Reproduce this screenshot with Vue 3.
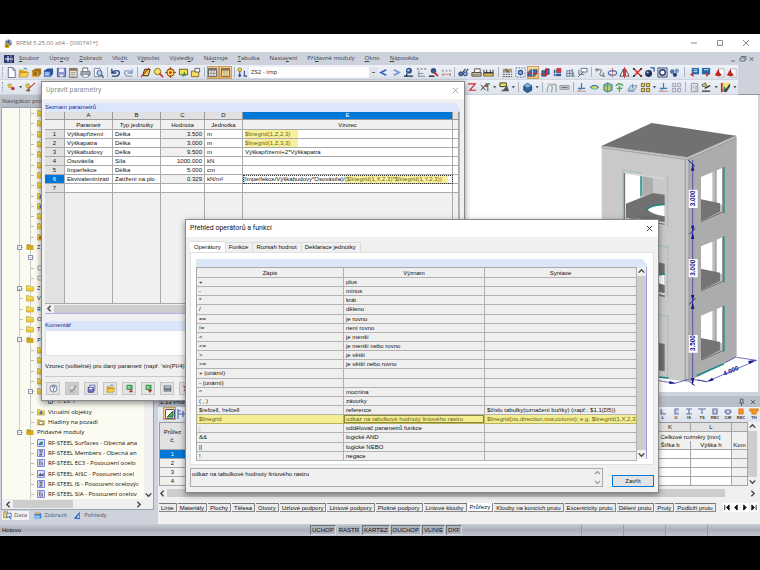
<script setup>
import { ref } from 'vue'

const menu = [
  ['', 'S', 'oubor'], ['Úpr', 'a', 'vy'], ['', 'Z', 'obrazit'], ['Vlo', 'ž', 'it'], ['V', 'ý', 'počet'],
  ['Výsled', 'k', 'y'], ['Ná', 's', 'troje'], ['', 'T', 'abulka'], ['Nasta', 'v', 'ení'],
  ['Pří', 'd', 'avné moduly'], ['', 'O', 'kno'], ['', 'N', 'ápověda'],
]

const glyph = {
  doc: '<path d="M2.500.500h5l2.500 2.500v8.500h-7.500z" fill="#fff" stroke="#667088"/><path d="M7.500.500v3h2.500" fill="none" stroke="#667088"/>',
  open: '<path d="M1 3h4l1 1h4v7H1z" fill="#d9a520"/><path d="M1 11l2-5h9l-2 5z" fill="#f6cf4f" stroke="#a87b12" stroke-width=".6"/><path d="M6 2q3-2 4 1" stroke="#2c6ab5" fill="none"/>',
  box: '<path d="M1 4l4-2.500h6v6l-3 3.500H1z" fill="#a9711f"/><path d="M1 5h7v6H1z" fill="#dfa23e"/><path d="M2.500 6.500h4M2.500 8.500h4" stroke="#4b3210"/>',
  bbox: '<path d="M1 4l4-2.500h6v6l-3 3.500H1z" fill="#2b4f98"/><path d="M1 5h7v6H1z" fill="#5d8ad1"/><path d="M2.500 6.500h4M2.500 8.500h4" stroke="#e7edf9"/>',
  save: '<path d="M1.500 1.500h9v9h-9z" fill="#8c93cf" stroke="#4a4f8e"/><path d="M3.500 1.500h5v4h-5z" fill="#f3f4fb"/><path d="M4 8h4v2.500H4z" fill="#dfe1f0"/>',
  sheet: '<path d="M1.500 1.500h8.500v10H1.500z" fill="#e9e3d6" stroke="#77706a"/><path d="M2 2h8v2H2z" fill="#8d6a4a"/><path d="M3 6h5M3 8h5M3 10h5" stroke="#8a8a8a" stroke-width=".8"/>',
  print: '<path d="M3 5V1h5l1 4" fill="#fff" stroke="#666"/><path d="M1 5h10v4H1z" fill="#a5adbd" stroke="#4d5566" stroke-width=".7"/><path d="M3 8h6v3H3z" fill="#fff" stroke="#555" stroke-width=".6"/>',
  preview: '<path d="M1.500 1.500h6.500v9H1.500z" fill="#fff" stroke="#7881a0"/><circle cx="7" cy="6.500" r="2.800" fill="#b9cfee" stroke="#40588e"/><path d="M9 8.500l2.500 3" stroke="#40588e" stroke-width="1.600"/>',
  undo: '<path d="M2 2v4.500h5M2.500 6q3-3 7-1.500 2 3-1.500 5.500H2" fill="none" stroke="#26447c" stroke-width="1.500"/>',
  redo: '<path d="M10 2v4.500H5M9.500 6q-3-3-7-1.500-2 3 1.500 5.500H10" fill="none" stroke="#8ca0bf" stroke-width="1.500"/>',
  para: '<path d="M3 9.500l2-7h6l-2 7z" fill="#f2dd3c" stroke="#222"/><path d="M1 11L10 1" stroke="#cc2424" stroke-width="1.200"/>',
  zoom: '<circle cx="5" cy="5" r="3.500" fill="#f3e268" stroke="#8a7412"/><path d="M7 7l4 4" stroke="#c33" stroke-width="1.800"/>',
  target: '<circle cx="6" cy="6" r="4" fill="#f5e35f" stroke="#a04010" stroke-width="1.200"/><circle cx="6" cy="6" r="1.500" fill="#c22"/><path d="M6 0v3M6 9v3M0 6h3M9 6h3" stroke="#a04010"/>',
  win: '<path d="M1.500 2.500h9v6h-9z" fill="#f1e052" stroke="#665c1b"/><path d="M4 11l3-6 2 4z" fill="#32925c"/>',
  folder: '<path d="M1.500 4.500h8v6h-8z" fill="#f7dc64" stroke="#7e6a1d"/><path d="M5.500 1.500h5v4h-5z" fill="#fff" stroke="#556"/>',
  grid: '<path d="M1.500 1.500h9v9h-9z" fill="#e4e4e4" stroke="#555"/><path d="M2 2h8v2H2z" fill="#777"/><path d="M4.500 4v6M7.500 4v6M2 7h8" stroke="#888" stroke-width=".8"/>',
  cols: '<path d="M1.500 1.500h9v9h-9z" fill="#f3d9a6" stroke="#6c5840"/><path d="M2 2h8v2H2z" fill="#8c745a"/><path d="M4.500 4v6M7.500 4v6" stroke="#9b7e57" stroke-width=".8"/>',
  load: '<circle cx="3" cy="3" r="2" fill="#eed43b" stroke="#77671b" stroke-width=".7"/><path d="M3 5v5M1.500 8.500L3 10.500l1.500-2M8 4v6h3" stroke="#2d4e87" fill="none" stroke-width="1.200"/>',
  prev: '<path d="M9 3L3 6l6 3" fill="none" stroke="#3565ba" stroke-width="1.700"/>',
  next: '<path d="M3 3l6 3-6 3" fill="none" stroke="#7195d2" stroke-width="1.700"/>',
  pin: '<circle cx="6.500" cy="4" r="3.200" fill="#29508b"/><circle cx="6" cy="3.500" r="1.300" fill="#a9c7ef"/><path d="M1 10h10M4 7v4" stroke="#1c2f55" stroke-width="1.500"/>',
  rpin: '<circle cx="6" cy="4" r="3" fill="#2c568f"/><path d="M6 5l5 5" stroke="#cf2525" stroke-width="2"/><path d="M1 10h6" stroke="#223" stroke-width="1.500"/>',
  xxx: '<path d="M1 1l2 2M3 1L1 3M5 1l2 2M7 1L5 3M9 1l2 2M11 1L9 3" stroke="#667" stroke-width=".7"/><path d="M3 4v6M2 10h8M3 7h5" stroke="#7685a0" fill="none"/>',
  rxx: '<path d="M1 3l2 2M3 3L1 5M5 3l2 2M7 3L5 5M9 3l2 2M11 3L9 5" stroke="#778" stroke-width=".7"/><path d="M1 8h10" stroke="#d77f7f"/><path d="M2 7v3M10 7v3" stroke="#888"/>',
  glasses: '<circle cx="3" cy="7.500" r="2.200" fill="#5477ad" stroke="#243f6c"/><circle cx="8" cy="7.500" r="2.200" fill="#8caad6" stroke="#243f6c"/><path d="M5 6L8 2M9 5l2-3" stroke="#243f6c" stroke-width="1.200"/>',
  car: '<path d="M1 6h10v4H1z" fill="#ddd0a4" stroke="#444"/><path d="M4 2h6v4H4z" fill="#fff" stroke="#444"/><path d="M2 8h8" stroke="#222" stroke-dasharray="1 1"/>',
  bridge: '<path d="M1 3v7M4 3v7M8 3v7M11 3v7M1 6h10" stroke="#333"/><path d="M1 7h10v3H1z" fill="#d8b94a" stroke="#444" stroke-width=".6"/>',
  pat: '<path d="M1 2h10v3H1z" fill="#b69875"/><path d="M1 5.500h10M1 8h10M1 10.500h10" stroke="#444" stroke-dasharray="2 1"/><path d="M4 2l3 4" stroke="#222"/>',
  gear: '<path d="M1 1h10v10H1z" fill="none" stroke="#5a6a8d" stroke-dasharray="1.500 1.500"/><circle cx="6" cy="6" r="2.300" fill="#92aee0" stroke="#28498b" stroke-width="1.200"/>',
  plane: '<path d="M1 6l3-3h7v4l-3 3H1z" fill="#3f72b9" stroke="#213b70" stroke-width=".8"/><path d="M1 7h10" stroke="#c22b2b" stroke-width="1.400"/><path d="M6 2v8" stroke="#d8e4f5" stroke-width=".8"/>',
  blk: '<path d="M2 4h4v6H2zM6 2h4v6H6z" fill="#3d6aae" stroke="#1e3667" stroke-width=".7"/><path d="M1 8h7M7 1v9" stroke="#d13030" stroke-width="1.200"/>',
  blk2: '<path d="M2 3h8v7H2z" fill="#33599b"/><path d="M5 1h5v5H5z" fill="#d33b3b"/><path d="M1 7h10M4 2v9" stroke="#dde6f5" stroke-width=".8"/>',
  truss: '<path d="M1 10h10M2 10V4M5 10V4M8 10V2M2 4h6M2 7h7" stroke="#5d8296" fill="none"/><path d="M9 5v5" stroke="#d35f5f"/>',
  comment: '<path d="M4.500 1.500h6.500v4H4.500z" fill="#fff" stroke="#596a8b"/><path d="M1 11L7 5M2 3v5h6" stroke="#596a8b" fill="none"/>',
  curve: '<circle cx="2" cy="3" r="1.200" fill="none" stroke="#555"/><path d="M3 3q6-1 3 3t5 4M9 6v4" fill="none" stroke="#566"/>',
  rot: '<ellipse cx="6" cy="6.500" rx="4.500" ry="2.500" fill="none" stroke="#4676b9" stroke-width="1.200"/><path d="M6 1v10" stroke="#c44" stroke-dasharray="2 1"/>',
  mirror: '<path d="M5 2v8H1zM7 2v8h4z" fill="#fff" stroke="#444"/><path d="M6 0v12" stroke="#d03030"/>',
  cross: '<path d="M2 2l8 8M10 2l-8 8" stroke="#c62828" stroke-width="1.500"/><path d="M1 1h2v2H1zM9 1h2v2H9zM1 9h2v2H1zM9 9h2v2H9z" fill="#333"/>',
  ball: '<circle cx="5" cy="7" r="3.800" fill="#20355e"/><circle cx="4" cy="6" r="1.200" fill="#b9c9e6"/><path d="M7 1h4v4" fill="none" stroke="#2f57a0" stroke-width="1.400"/>',
  ring: '<path d="M1 1h10v10H1z" fill="#cdd6e6" stroke="#3d4e72"/><circle cx="6" cy="6" r="3" fill="#fff" stroke="#283c6a" stroke-width="1.500"/>',
  balls: '<circle cx="3.500" cy="5" r="2.500" fill="#5476b1"/><circle cx="8.500" cy="4" r="2.500" fill="#7d9bcd"/><circle cx="6.500" cy="8.500" r="2.300" fill="#27457d"/>',
  mod: '<path d="M3 1h8v7H3z" fill="#2470b0"/><path d="M5 3h4M5 5h4" stroke="#cfe5f7"/><path d="M1 8l4-2v5z" fill="#c32f2f"/>',
  mod2: '<path d="M1 1h9v7H1z" fill="#2269a8"/><path d="M3 3h5" stroke="#d8e9f7"/><path d="M5 6l4 2-3 3z" fill="#c62f2f"/>',
  pdf: '<path d="M5 2h6v9H5z" fill="#fff" stroke="#999" stroke-width=".7"/><path d="M1 9l4-7 1 4 3 3-4 1z" fill="#c52020"/>',
  node: '<circle cx="4" cy="4" r="2" fill="#e9cf3a" stroke="#8a751b" stroke-width=".6"/><circle cx="7.500" cy="7" r="1.900" fill="#c92b2b"/>',
  line: '<path d="M1 10L11 1" stroke="#c33" stroke-width="1.200"/><circle cx="3" cy="4" r="2" fill="#e9d850" stroke="#6f651b" stroke-width=".6"/><circle cx="4" cy="9" r="1.700" fill="#5d8c3d"/>',
  zred: '<path d="M1 2h8L3 9h7" fill="none" stroke="#c72e3b" stroke-width="1.300"/>',
  axis: '<path d="M1 3l5 6M6 3L1 9" stroke="#333"/><path d="M6 2h5M8.500 2v8" stroke="#2f9152" stroke-width="1.300"/><circle cx="7" cy="4" r="1.500" fill="#c92b2b"/>',
  hand: '<path d="M1 1h7v4H1z" fill="#efe154" stroke="#333"/><path d="M2 10h9L9 4 5 8z" fill="#555"/>',
  cube: '<path d="M2 4l4-2.500L10.500 4v5L6 11.500 2 9z" fill="#2e6499" stroke="#1c3a66"/><path d="M2 4l4 2 4.500-2L6 1.500z" fill="#7fb3dd"/>',
  arch: '<path d="M1 11q1-9 4-8t1 8M6 3h5v8" fill="none" stroke="#7c9486"/><path d="M1 2h10" stroke="#c99a9a" stroke-dasharray="1 1"/>',
  slab: '<path d="M1 4h10v4H1z" fill="#c5cad2" stroke="#8d95a3"/><path d="M3 6h6" stroke="#666"/>',
  sup: '<path d="M6 1v6M2 7h8" stroke="#4777b6" stroke-width="1.300"/><path d="M1 10h10" stroke="#c77" stroke-width=".9"/><path d="M6 7l-3 3" stroke="#4a8d59"/>',
  surf: '<path d="M1 6q5-5 10 0-5 5-10 0z" fill="#58b6a4"/><path d="M3 6q3-3 6 0-3 3-6 0z" fill="#e6dc49"/><path d="M1 6q5-5 10 0" stroke="#4a63bd" fill="none"/>',
  solid: '<path d="M2 3l4-2 5 2v6l-5 2-4-2z" fill="#7ac0a4" stroke="#427d83"/><path d="M4 5h5v4H4z" fill="#d6c857"/><path d="M6 1v10" stroke="#5c7fc4"/>',
  tree: '<path d="M6 11V4M2 4q4-4 8 0M3 7h6" stroke="#58a35b" stroke-width="1.500" fill="none"/>',
  sheetg: '<path d="M1 9l3-5h7l-3 5z" fill="#c7ddd8" stroke="#7e96ab"/><path d="M1 10h7M6 2v5" stroke="#5d86c0"/>',
  quad: '<path d="M1.500 1.500h3.500v3.500H1.500zM7 1.500h3.500v3.500H7zM1.500 7h3.500v3.500H1.500zM7 7h3.500v3.500H7z" fill="#efd643" stroke="#4e481f" stroke-width=".8"/>',
  quadg: '<path d="M1.500 1.500h3.500v3.500H1.500zM7 1.500h3.500v3.500H7zM1.500 7h3.500v3.500H1.500zM7 7h3.500v3.500H7z" fill="#dbe0e9" stroke="#8992a5" stroke-width=".8"/>',
  list: '<path d="M2.500 1.500h7v9h-7z" fill="#e8ecf2" stroke="#8b95a7"/><path d="M4 4h1v1H4z" fill="#c33"/><path d="M4 6h1v1H4z" fill="#393"/><path d="M6 4.500h3M6 6.500h3M6 8.500h3" stroke="#889" stroke-width=".7"/>',
  wand: '<path d="M1 3l4-2 1 3-4 1z" fill="#eede45" stroke="#554"/><path d="M1 10h9M4 7l6-3" stroke="#333" stroke-width="1.500"/>',
  rain: '<path d="M1 1h2v10H1z" fill="#c22"/><path d="M3 1h2v8H3z" fill="#e8d52d"/><path d="M5 4l3 6H3z" fill="#31983d"/><path d="M4 11L11 1v4L7 11z" fill="#345"/><path d="M7 1h4L6 7z" fill="#f2e340"/>',
  help: '<circle cx="6" cy="6" r="4.700" fill="#eef2fb" stroke="#56618a"/><path d="M4.300 4.500q0-1.700 1.700-1.700t1.700 1.500Q7.700 5.500 6 6v1.300M6 8.300v1.200" fill="none" stroke="#34447e" stroke-width="1.100"/>',
  check: '<path d="M1.500 2h7.500v9H1.500z" fill="#dcdcdc" stroke="#a2a2a2" stroke-width=".7"/><path d="M3 7l2 3 6-8" fill="none" stroke="#7f7f7f" stroke-width="1.400"/>',
  saves: '<path d="M3.500 1.500h7v7h-7z" fill="#eef" stroke="#4a4f9e"/><path d="M1.500 4.500h7v6.500h-7z" fill="#7075c6" stroke="#34397c"/><path d="M3 5h4v2H3z" fill="#fff"/>',
  xls: '<path d="M2 1h8v7H2z" fill="#3a9a52"/><path d="M3.500 2.500l4 4M7.500 2.500l-4 4" stroke="#fff"/><path d="M5 11l3-4 3 4z" fill="#c62b2b"/>',
  xls2: '<path d="M2 1h8v7H2z" fill="#3a9a52"/><path d="M3.500 2.500l4 4M7.500 2.500l-4 4" stroke="#fff"/><path d="M5 8h6l-3 4z" fill="#c62b2b"/>',
  calc: '<path d="M1 2h10v8H1z" fill="#555c6b"/><path d="M2 3h8v2H2z" fill="#cdd6e2"/><path d="M2 6.500h8M2 8.500h8" stroke="#e5e5e5" stroke-dasharray="1.500 1"/>',
  del: '<path d="M1 1l5 4 4-3-3 4 4 5-5-3-4 2 2-4z" fill="#c7202c"/>',
  greenT: '<path d="M1.500 1.500h9v9h-9z" fill="#fff" stroke="#558"/><path d="M3 9l6-6v6z" fill="#4cae4c" stroke="#276a2a"/>',
  tblB: '<path d="M1 1v10M11 1v10M1 6h10M6 3v6M1 3h3M8 3h3" stroke="#4a6cb0" stroke-width="1.200"/>',
}

const bar1 = 'doc open box bbox save sheet print preview | undo redo | para zoom target win folder | grid* cols* | load combo prev next pin xxx rpin rxx | glasses car bridge || pat gear plane* blk blk2 truss comment | curve rot mirror cross ball ring balls || mod mod2 pdf pdf'.split(' ')
const bar2 = 'node v line space zred axis v hand v | cube v | arch slab | sup surf solid tree sheetg quad v sup quadg | list wand v rain v'.split(' ')
const kind = (t) => ({ '|': 'sep', '||': 'sep wide', v: 'drop', space: 'space' }[t])

const loadCase = ref('ZS2 - Imp')

const tree = [
  ...Array.from({ length: 11 }, (_, i) => ({ lv: 2, ic: i === 8 || i === 9 ? 'blue' : 'fold' })),
  { lv: 2, ic: 'fold' }, { lv: 2, ic: 'orange' },
  { lv: 1, ic: 'fopen', ex: '−', t: 'Z' },
  { lv: 2, ex: '−', t: '' }, { lv: 2, ic: 'cb' }, { lv: 2, ic: 'cb' }, 
  { lv: 1, ic: 'fold', ex: '+', t: 'Z' }, { lv: 1, ic: 'fold', t: 'V' }, { lv: 1, ic: 'fold', t: 'Ř' },
  { lv: 1, ic: 'fold', t: 'O' }, { lv: 1, ic: 'fold', t: 'T' },
  { lv: 1, ic: 'fopen', ex: '−', t: 'P' },
  { lv: 2, ic: 'fold' }, { lv: 2, ic: 'fold' }, { lv: 2, ic: 'fold' }, { lv: 2, ic: 'fold' },
  { lv: 2, ic: 'fold', ex: '−' }, { lv: 3, ex: '+', t: '1: LK 1' },
  { lv: 2, ic: 'blue', t: 'Vizuální objekty' }, { lv: 2, ic: 'photo', t: 'Hladiny na pozadí' },
  { lv: 1, ic: 'fopen', ex: '−', t: 'Přídavné moduly' },
  { lv: 2, ic: 'm1', t: 'RF-STEEL Surfaces - Obecná ana' }, { lv: 2, ic: 'm2', t: 'RF-STEEL Members - Obecná an' },
  { lv: 2, ic: 'm3', t: 'RF-STEEL EC3 - Posouzení ocelo' }, { lv: 2, ic: 'm4', t: 'RF-STEEL AISC - Posouzení ocel' },
  { lv: 2, ic: 'm2', t: 'RF-STEEL IS - Posouzení ocelovýc' }, { lv: 2, ic: 'm3', t: 'RF-STEEL SIA - Posouzení ocelov' },
]
const foldBase = '<path d="M.500 2.500h4l1 1.500h5.500v6.500H.500z" fill="#f3cf3a" stroke="#a88616" stroke-width=".8"/><path d="M1 5h9.500" stroke="#fbee9b"/>'
const modBase = '<path d="M.750.750h10.500v10.500H.750z" fill="#dfe2fb" stroke="#8286e0" stroke-width="1.500"/>'
const treeGlyph = {
  fold: foldBase,
  fopen: '<path d="M1 2h4l1 1.500h5V10H1z" fill="#b8921a"/><path d="M0 5h10l1.500 5.500H1.500z" fill="#d3ac22"/>',
  blue: foldBase + '<circle cx="6" cy="7" r="2.500" fill="#3d7cc4"/>',
  orange: foldBase + '<path d="M3 5h6v4H3z" fill="#e0562a"/>',
  photo: foldBase + '<path d="M3 5h6v4.500H3z" fill="#fff" stroke="#555"/>',
  cb: '<path d="M1.500 3h6v6h-6z" fill="#fff" stroke="#777"/>',
  m1: modBase + '<path d="M2 8l3-4h5L8 8z" fill="#2f9d74"/><path d="M2 8h6l1 1H3z" fill="#25419b"/>',
  m2: modBase + '<path d="M3 3h6M3 9h5M6 3v6" stroke="#45506f" stroke-width="1.500"/><path d="M2 6h8" stroke="#8890a5"/>',
  m3: modBase + '<path d="M3 3h5M3 6h6M3 9h6M4 3v6M8 5v4" stroke="#4b556e"/>',
  m4: modBase + '<path d="M2 9l3-5 2 3 3-3v5z" fill="#47536f"/>',
}

const params = [
  ['Výškapřízemí', 'Délka', '3.500', 'm', '', '$linegrid(1,Z,2,3)'],
  ['Výškapatra', 'Délka', '3.000', 'm', '', '$linegrid(1,Z,3,3)'],
  ['Výškabudovy', 'Délka', '9.500', 'm', 'Výškapřízemí+2*Výškapatra', ''],
  ['Osovásíla', 'Síla', '1000.000', 'kN', '', ''],
  ['Imperfekce', 'Délka', '5.000', 'cm', '', ''],
  ['Ekvivalentnízatí', 'Zatížení na plo', '0.329', 'kN/m²', '(Imperfekce/Výškabudovy*Osovásíla)/', '($linegrid(1,X,2,3)*$linegrid(1,Y,2,3))'],
  ['', '', '', '', '', ''],
]

const ops = [
  ['+', 'plus', ''], ['-', 'mínus', ''], ['*', 'krát', ''], ['/', 'děleno', ''], ['==', 'je rovno', ''],
  ['!=', 'není rovno', ''], ['<', 'je menší', ''], ['<=', 'je menší nebo rovno', ''], ['>', 'je větší', ''],
  ['>=', 'je větší nebo rovno', ''], ['+ (unární)', '', ''], ['- (unární)', '', ''], ['^', 'mocnina', ''],
  ['( , )', 'závorky', ''], ['$refcell, !refcell', 'reference', '$číslo tabulky(označení buňky) (např.: $1.1(D5))'],
  ['$linegrid', 'odkaz na tabulkové hodnoty liniového rastru', '$linegrid(no,direction,row,column); e.g. $linegrid(1,X,2,3)'],
  [';', 'oddělovač parametrů funkce', ''], ['&&', 'logické AND', ''], ['||', 'logické NEBO', ''], ['!', 'negace', ''],
]
const comment = ref('')
const description = ref('odkaz na tabulkové hodnoty liniového rastru')

const dlgButtons = [['help', 'Nápověda'], ['check', 'Použít'], ['saves', 'Uložit'], ['open', 'Otevřít'], ['xls', 'Export'], ['xls2', 'Import'], ['calc', 'Kalkulačka'], ['del', 'Smazat']]
const opTabs = ['Operátory', 'Funkce', 'Rozsah hodnot', 'Deklarace jednotky']
const sheetTabs = ['Linie', 'Materiály', 'Plochy', 'Tělesa', 'Otvory', 'Uzlové podpory', 'Liniové podpory', 'Plošné podpory', 'Liniové klouby', 'Průřezy', 'Klouby na koncích prutu', 'Excentricity prutu', 'Dělení prutu', 'Pruty', 'Podloží prutu']
const toggles = ['UCHOP', 'RASTR', 'KARTEZ', 'OUCHOP', 'VLINIE', 'DXF']
const sections = [
  ['L', 'M4 0v5h5', 'L'], ['U', 'M9 0H5v5h4', 'U'], ['IS', 'M3 0h6M6 0v5M3 5h6', 'IS'], ['TS', 'M2 0h8M6 0v5', 'TS'],
  ['REC', 'M4 0h4v5H4z', 'REC'], ['CIR', 'M4 1h4l1 2-2 2H5L3 3z', 'CIR'], ['REC', 'M4 0h4v5H4z', 'RECo'], ['TH', 'M2 0h8v2H8v3H4V2H2z', 'THo'],
]
const pager = ['M2 1v6M7 1L4 4l3 3z', 'M6 1L3 4l3 3z', 'M3 1l3 3-3 3z', 'M7 1v6M2 1l3 3-3 3z']
</script>

<template>
  <div class="page">
    <div class="app">
      <header class="title">
        <svg class="logo" viewBox="0 0 12 12"><circle cx="6" cy="5" r="4.500" fill="#8fa2c4" /><path d="M2 4h6M3 7h7M6 1v9" stroke="#31456f" /><path d="M1 6h6v6H1z" fill="#e3b72d" /><path d="M2 8h4M2 10h4" stroke="#594712" /></svg>
        <h1>RFEM 5.25.00 x64 - [000741*]</h1>
        <svg class="caps" viewBox="0 0 60 10"><path d="M1 5h6M27.500 2.500h5v5h-5zM53 2l6 6M59 2l-6 6" fill="none" stroke="#888" /></svg>
      </header>

      <nav class="menu">
        <svg class="flag" viewBox="0 0 10 8"><path d="M0 0h10v8H0z" fill="#26376f" /><path d="M1 4h8M4 1v6" stroke="#fff" /><path d="M7 0v8" stroke="#8a97c4" /></svg>
        <a v-for="m in menu" :key="m.join('')" href="#">{{ m[0] }}<u>{{ m[1] }}</u>{{ m[2] }}</a>
        <svg class="mdi" viewBox="0 0 26 8"><path d="M1 6h4M10 3h5v3h-5zM11 1.500h5v3M19.500 2l4 4M23.500 2l-4 4" fill="none" stroke="#666e7d" /></svg>
      </nav>

      <div class="bars">
        <div class="bar">
          <i class="grip"></i>
          <template v-for="(t, i) in bar1" :key="i">
            <select v-if="t === 'combo'" v-model="loadCase" class="combo" aria-label="Zatěžovací stav"><option>ZS2 - Imp</option></select>
            <i v-else-if="kind(t)" :class="kind(t)"></i>
            <button v-else class="tool" :class="{ on: t.endsWith('*') }" :aria-label="t"><svg viewBox="0 0 12 12" v-html="glyph[t.replace('*', '')]"></svg></button>
          </template>
        </div>
        <div class="bar">
          <i class="grip"></i>
          <template v-for="(t, i) in bar2" :key="i">
            <i v-if="kind(t)" :class="kind(t)"></i>
            <button v-else class="tool" :aria-label="t"><svg viewBox="0 0 12 12" v-html="glyph[t]"></svg></button>
          </template>
        </div>
      </div>

      <main class="work">
        <aside class="navi">
          <h2>Navigátor projektu</h2>
          <div class="treebox">
            <ul class="tree">
              <li v-for="(n, i) in tree" :key="i" :class="'lv' + n.lv">
                <span class="exp"><b v-if="n.ex">{{ n.ex }}</b></span>
                <svg v-if="n.ic" viewBox="0 0 12 12" v-html="treeGlyph[n.ic]"></svg>
                <span class="lbl">{{ n.t }}</span>
              </li>
            </ul>
            <div class="vscroll pale"><i></i><svg viewBox="0 0 8 8"><path d="M1.500 3L4 5.500 6.500 3" /></svg></div>
          </div>
          <div class="hscroll treeh"><svg viewBox="0 0 8 8"><path d="M5 1.500L2.500 4 5 6.500" /></svg><i></i><svg viewBox="0 0 8 8"><path d="M3 1.500L5.500 4 3 6.500" /></svg></div>
          <div class="navtabs">
            <a href="#" class="cur"><svg viewBox="0 0 12 12"><path d="M1 1h5v8H1z" fill="#f2d468" stroke="#987a1f" /><path d="M5 3h6v5H5z" fill="#dcebfa" stroke="#3569ab" /><path d="M8 7l3 4" stroke="#3569ab" stroke-width="1.500" /></svg>Data</a>
            <a href="#"><svg viewBox="0 0 12 12"><path d="M2 3h9v7H2z" fill="#3c81cc" /><path d="M1 6h8v5H1z" fill="#8fbcec" /><path d="M3 1h6v3H3z" fill="#e2b55d" /></svg>Zobrazit</a>
            <a href="#"><svg viewBox="0 0 12 12"><path d="M1 10L9 1v10z" fill="#2c67c0" /><path d="M5 9l3-4v4z" fill="#e6effa" /></svg>Pohledy</a>
          </div>
        </aside>

        <section class="right">
          <div class="view">
            <svg class="model" viewBox="0 0 540 888">
              <path d="M65 155L322 190 322 860 65 825z" fill="#c9c9c9" />
              <path d="M322 190L470 125V785L322 862z" fill="#acacac" />
              <path d="M314 190h16v672l-16-4z" fill="#a2a2a2" />
              <path d="M318 190h7v670h-7z" fill="#c4c4c4" />
              <path d="M66 152L215 84 467 122 322 187z" fill="#717171" />
              <path d="M66 152L322 187 467 122v7L322 194 66 158z" fill="#c8c8c8" stroke="#777" stroke-width="1.500" />
              <path d="M131 232L254 248V392L131 372z" fill="#d5d5d5" />
              <path d="M137 236l44 7v70l-44 16z" fill="#fff" />
              <path d="M187 244l32 5v45l-32 10z" fill="#adadad" />
              <path d="M219 249l35 5v45l-35-5z" fill="#c8c8c8" />
              <path d="M183 244v60" stroke="#2d9b99" stroke-width="5" />
              <path d="M138 326l80-32 36 5v82l-116-16z" fill="#717171" />
              <path d="M254 329q-45 2-52 14 8 14 52 21z" fill="#fff" />
              <path d="M200 345q10-14 54-16" fill="none" stroke="#108782" stroke-width="4" />
              <path d="M133 234v140M138 366l116 22" stroke="#777" stroke-width="4" />
              <path d="M129 226v148M263 245v152M263 452v156M263 660v190M130 226l56 8M236 452l27 4M236 660l27 4" stroke="#65b2ae" stroke-width="1.500" stroke-dasharray="14 3" />
              <path d="M225 500l29 6v100l-29-5z" fill="#727272" /><path d="M225 536l29 2v32l-29-8z" fill="#fff" />
              <path d="M225 542l30-5" stroke="#168982" stroke-width="4" /><path d="M225 592l30 6" stroke="#ddd" stroke-width="6" />
              <path d="M225 742l29 5v82l-29-5z" fill="#707070" />
              <g v-for="y in [0, 208, 416]" :key="y" :transform="`translate(0 ${y})`">
                <path d="M363 246L434 216V352L363 383z" fill="#bdbdbd" />
                <path d="M363 246L397 232V320L363 328z" fill="#fff" />
                <path d="M411 226l16-7v110l-16-4z" fill="#fff" />
                <path d="M363 313l57 12v25l-57 28z" fill="#747474" />
                <path d="M363 380l66-29V218" fill="none" stroke="#686868" stroke-width="3" />
                <path d="M406 228v95" stroke="#63b4af" stroke-width="2" />
                <path d="M432 216v138" stroke="#178b86" stroke-width="4" />
              </g>
              <path d="M350 842l82-36M236 846l30 3" stroke="#148e86" stroke-width="5" />
              <path d="M338 195V870M470 787l60 9L380 860l-50-8M434 804l34-18M380 860l-28-6M236 857l48 8 42-12" fill="none" stroke="#2527a5" stroke-width="2" />
              <path d="M338 207l-5 20h10zM338 870l-5-20h10zM526 795l-22 3 5 9zM382 860l20-4-6-8zM288 865l-20-7v9zM338 410l-5-18h10zM338 412l-5 20h10zM338 618l-5-18h10zM338 620l-5 22h10z" fill="#14148f" />
              <path d="M325 196l20 18M328 418l18-18M328 628l18-18M330 860l14 12" stroke="#1b1b99" stroke-width="3" />
              <path d="M326 284h27v55h-27zM326 492h27v55h-27zM326 720h27v53h-27z" fill="#fff" />
              <g class="dim"><text transform="translate(345 334) rotate(-90)">3.000</text><text transform="translate(345 542) rotate(-90)">3.000</text><text transform="translate(345 768) rotate(-90)">3.500</text><text transform="translate(433 842) rotate(-22)">4.000</text></g>
            </svg>
          </div>

          <div class="tabhead"><h2>1.13 Průřezy</h2><svg viewBox="0 0 20 8"><path d="M1 5h5M3.500 5v3M2.500 1v4M5 1v4M2.500 1H5M13 2l4 4M17 2l-4 4" fill="none" stroke="#5d6674" /></svg></div>
          <div class="tabtools">
            <button class="tool on" aria-label="Graf"><svg viewBox="0 0 12 12" v-html="glyph.greenT"></svg></button>
            <button class="tool" aria-label="Tabulka"><svg viewBox="0 0 12 12" v-html="glyph.tblB"></svg></button>
            <i class="push"></i>
            <button v-for="s in sections" :key="s[2]" class="tool sect" :aria-label="s[2]">
              <svg viewBox="0 0 12 12"><path :d="s[1]" :class="{ org: s[2].endsWith('o') }" transform="translate(0 1)" /><text x="6" y="11" text-anchor="middle">{{ s[0] }}</text></svg>
            </button>
          </div>
          <div class="gridbox">
            <table class="secs">
              <colgroup><col class="cn" /><col /><col class="ck" /><col class="ck" /><col class="cm" /></colgroup>
              <thead>
                <tr><th rowspan="3">Průřez<br />č.</th><th></th><th>K</th><th>L</th><th></th></tr>
                <tr><th></th><th colspan="2" class="nb">Celkové rozměry [mm]</th><th class="nb"></th></tr>
                <tr><th></th><th class="nt">Šířka b</th><th class="nt">Výška h</th><th class="nt">Kom</th></tr>
              </thead>
              <tbody><tr v-for="n in 4" :key="n"><th :class="{ sel: n === 1 }">{{ n }}</th><td></td><td></td><td></td><td class="off"></td></tr></tbody>
            </table>
            <div class="vscroll"><svg viewBox="0 0 8 8"><path d="M1.500 5L4 2.500 6.500 5" /></svg><i></i><svg viewBox="0 0 8 8"><path d="M1.500 3L4 5.500 6.500 3" /></svg></div>
          </div>
          <div class="hscroll sech"><svg viewBox="0 0 8 8"><path d="M5 1.500L2.500 4 5 6.500" /></svg><i></i><svg viewBox="0 0 8 8"><path d="M3 1.500L5.500 4 3 6.500" /></svg></div>
          <div class="sheets">
            <button v-for="s in sheetTabs" :key="s" :class="{ cur: s === 'Průřezy' }">{{ s }}</button>
            <span class="pager"><button v-for="p in pager" :key="p" aria-label="Posun"><svg viewBox="0 0 8 8"><path :d="p" fill="#111" stroke="#111" /></svg></button></span>
          </div>
        </section>
      </main>

      <footer class="status">
        <span class="ready">Hotovo</span>
        <button v-for="t in toggles" :key="t" :class="{ flat: t === 'RASTR' }">{{ t }}</button>
        <span class="cells"><i></i><i></i><i></i><i></i></span>
      </footer>
    </div>

    <section class="dlg params">
      <header><h2>Upravit parametry</h2><svg viewBox="0 0 8 8"><path d="M1 1l6 6M7 1L1 7" /></svg></header>
      <div class="pbody">
        <h3>Seznam parametrů</h3>
        <div class="plist">
          <table>
            <colgroup><col class="p0" /><col class="p1" /><col class="p1" /><col class="p3" /><col class="p4" /><col /><col class="p6" /></colgroup>
            <thead>
              <tr class="abc"><th></th><th>A</th><th>B</th><th>C</th><th>D</th><th class="sel">E</th><th></th></tr>
              <tr class="hd"><th></th><th>Parametr</th><th>Typ jednotky</th><th>Hodnota</th><th>Jednotka</th><th>Vzorec</th><th></th></tr>
            </thead>
            <tbody>
              <tr v-for="(p, i) in params" :key="i">
                <th :class="{ sel: i === 5 }">{{ i + 1 }}</th><td>{{ p[0] }}</td><td>{{ p[1] }}</td>
                <td class="num" :class="{ off: i !== 3 && i !== 4 && i !== 6 }">{{ p[2] }}</td><td>{{ p[3] }}</td>
                <td class="frm" :class="{ cell: i === 5 }">{{ p[4] }}<mark v-if="p[5]" :class="{ long: i < 2 }">{{ p[5] }}</mark></td><td></td>
              </tr>
              <tr class="rest"><th></th><td></td><td></td><td></td><td></td><td></td><td></td></tr>
            </tbody>
          </table>
        </div>
        <div class="hscroll"><svg viewBox="0 0 8 8"><path d="M5 1.500L2.500 4 5 6.500" /></svg><i></i></div>
        <h3 class="kom"><label for="kom">Komentář</label></h3>
        <textarea id="kom" v-model="comment"></textarea>
        <p class="hint">Vzorec (volitelné) pro daný parametr (např. 'sin(PI/4)')</p>
        <div class="btns"><button v-for="b in dlgButtons" :key="b[0]" :class="{ dis: b[0] === 'check' }" :aria-label="b[1]"><svg viewBox="0 0 12 12" v-html="glyph[b[0]]"></svg></button></div>
      </div>
    </section>

    <section class="dlg oper">
      <header><h2>Přehled operátorů a funkcí</h2><svg viewBox="0 0 8 8"><path d="M1 1l6 6M7 1L1 7" /></svg></header>
      <div class="obody">
        <div class="otabs"><button v-for="(t, i) in opTabs" :key="t" :class="{ cur: i === 0 }">{{ t }}</button></div>
        <div class="sheet">
          <div class="band"></div>
          <div class="olist">
            <table>
              <colgroup><col class="o1" /><col class="o2" /><col /></colgroup>
              <thead><tr><th>Zápis</th><th>Význam</th><th>Syntaxe</th></tr></thead>
              <tbody><tr v-for="(o, i) in ops" :key="i" :class="{ hl: i === 15 }"><td>{{ o[0] }}</td><td>{{ o[1] }}</td><td>{{ o[2] }}</td></tr></tbody>
            </table>
            <div class="vscroll"><svg viewBox="0 0 8 8"><path d="M1.500 5L4 2.500 6.500 5" /></svg><i></i><svg viewBox="0 0 8 8"><path d="M1.500 3L4 5.500 6.500 3" /></svg></div>
          </div>
        </div>
        <div class="obot">
          <div class="desc">
            <textarea v-model="description" readonly aria-label="Popis"></textarea>
            <div class="vscroll pale dimmed"><svg viewBox="0 0 8 8"><path d="M1.500 5L4 2.500 6.500 5" /></svg><i></i><svg viewBox="0 0 8 8"><path d="M1.500 3L4 5.500 6.500 3" /></svg></div>
          </div>
          <button class="close">Zavřít</button>
        </div>
      </div>
    </section>
  </div>
</template>

<style>
body { margin: 0; background: #000; }
</style>

<style scoped>
* { box-sizing: border-box; }
.page { position: relative; min-height: 100vh; padding: 34px 0; display: flex; flex-direction: column; background: #000; overflow: hidden; font: 6px/8px "Liberation Sans", Arial, sans-serif; color: #111; }
.app { flex: 1; display: flex; flex-direction: column; background: #cdd2dc; min-width: 0; }
h1, h2, h3, p, ul { margin: 0; padding: 0; font: inherit; }
button { font: inherit; color: inherit; padding: 0; margin: 0; border: 0; background: none; }
svg { display: block; flex: none; }
i { display: block; }
a { color: inherit; text-decoration: none; }
textarea { display: block; font: inherit; color: inherit; border: 0; padding: 0; margin: 0; resize: none; outline: 0; overflow: hidden; }
table { border-collapse: separate; border-spacing: 0; table-layout: fixed; width: 100%; }
th, td { padding: 0; font-weight: 400; overflow: hidden; white-space: nowrap; line-height: 8px; }

.title { height: 18px; display: flex; align-items: center; background: #fff; padding: 0 10px 0 4px; gap: 3px; }
.title h1 { flex: 1; font: 6px/9px "Open Sans", sans-serif; color: #777; }
.logo { width: 9px; height: 9px; }
.caps { width: 60px; height: 10px; }
.menu { height: 13px; display: flex; align-items: center; gap: 10px; padding: 0 4px; color: #3c4149; font: 6px/9px "Open Sans", sans-serif; }
.flag { width: 10px; height: 8px; margin-right: -5px; }
.mdi { width: 26px; height: 8px; margin-left: auto; }

.bars { border-bottom: 1px solid #8e939c; padding-right: 22px; height: 30px; }
.bar { display: flex; height: 15px; align-items: center; background: linear-gradient(#eef1f7, #dde2ec); border-bottom: 1px solid #cfd5e0; }
.grip { width: 5px; height: 10px; border-left: 1px dotted #939bab; margin-left: 2px; margin-right: -2px; }
.tool { flex: 25 1 0; min-width: 0; height: 13px; display: flex; justify-content: center; align-items: center; }
.tool svg { width: 11px; height: 11px; }
.tool.on { background: linear-gradient(#fbd9a0, #f8bd66); box-shadow: inset 0 0 0 1px #c9a064; }
.sep { flex: 10 1 0; height: 10px; background: linear-gradient(#a9b1c0, #a9b1c0) center / 1px 100% no-repeat; }
.sep.wide { flex-grow: 14; }
.space { flex: 850 1 0; }
.drop { flex: 12 1 0; height: 3px; background: #555; clip-path: polygon(20% 0, 80% 0, 50% 100%); }
.combo { flex: 250 1 0; min-width: 0; height: 11px; border: 0; padding: 0 2px; appearance: none; font: 6px/11px "Open Sans", sans-serif; color: #222; background: linear-gradient(#666, #666) right 3px center / 3px 1px no-repeat, linear-gradient(#dde2ec, #dde2ec) right / 9px 100% no-repeat, #fff; }

.work { flex: 1; display: flex; gap: 3px; min-height: 0; }
.navi { width: 155px; display: flex; flex-direction: column; }
.navi h2 { height: 12px; padding: 0 2px; font: 600 6px/12px "Open Sans", sans-serif; color: #606873; background: linear-gradient(#c0c4cc, #b3b8c2); white-space: nowrap; overflow: hidden; }
.treebox { flex: 1; display: flex; background: #fcfbf2; border: 1px solid #9ba3b2; border-bottom: 0; margin: 0 1px; min-height: 0; }
.tree { flex: 1; min-width: 0; list-style: none; display: flex; flex-direction: column; font: 6px/8px "Open Sans", sans-serif; overflow: hidden; background: linear-gradient(#ccc, #ccc) 17px 0 / 1px 325px no-repeat, linear-gradient(#ccc, #ccc) 28px 0 / 1px 100% no-repeat; }
.tree li { flex: 1 1 0; min-height: 0; display: flex; align-items: center; gap: 3px; white-space: nowrap; }
.tree svg { width: 8px; height: 8px; }
.lv1 { padding-left: 15px; }
.lv2 { padding-left: 26px; }
.lv3 { padding-left: 46px; }
.exp { width: 6px; flex: none; height: 6px; display: flex; align-items: center; background: linear-gradient(#bbb, #bbb) 3px 3px / 3px 1px no-repeat; }
.exp b { width: 5px; height: 5px; background: #fff; border: 1px solid #8795ad; font: 4px/3px "Liberation Sans", sans-serif; text-align: center; }

.vscroll { width: 9px; flex: none; display: flex; flex-direction: column; background: #f0f0f0; }
.vscroll svg, .hscroll svg { width: 9px; height: 9px; fill: none; stroke: #444; stroke-width: 1.2; }
.vscroll i { flex: 1; background: #cdcdcd; }
.vscroll.pale i { background: none; }
.dimmed { opacity: .5; }
.hscroll { display: flex; align-items: center; height: 10px; background: #f0f0f0; }
.hscroll i { flex: 1; height: 8px; background: #cdcdcd; }
.treeh { margin: 0 1px; padding-left: 2px; height: 11px; border: 1px solid #9ba3b2; border-top: 0; }
.treeh i { flex: 0 0 60px; margin-right: auto; }
.treeh svg:last-child { margin-right: 10px; }
.navtabs { display: flex; align-items: center; gap: 3px; height: 14px; padding: 0 2px 3px; font: 6px/9px "Open Sans", sans-serif; color: #4f5662; }
.navtabs a { display: flex; align-items: center; gap: 2px; padding: 0 2px 0 1px; }
.navtabs a.cur { background: #f0f2f6; }
.navtabs svg { width: 9px; height: 9px; }

.right { flex: 1; min-width: 0; display: flex; flex-direction: column; }
.view { flex: 1; min-height: 0; background: #fff; display: flex; justify-content: flex-end; border-right: 2px solid #cdd2dc; }
.model { width: 180px; height: 296px; margin-right: -2px; }
.dim { font: bold 19px "Liberation Sans", sans-serif; fill: #14148f; }
.tabhead { height: 11px; margin-top: 4px; display: flex; justify-content: space-between; align-items: center; background: #b9bfca; padding: 0 2px; }
.tabhead svg { width: 20px; height: 8px; }
.tabtools { display: flex; height: 15px; padding: 0 0 2px 5px; background: linear-gradient(#eef1f7, #dde2ec); align-items: center; }
.tabtools .tool { flex: 0 0 13px; }
.tabtools .tool svg { width: 12px; height: 12px; }
.push { flex: 1; }
.sect path { fill: #aab4cd; fill-opacity: .5; stroke: #6878a3; stroke-width: 1.2; }
.sect path.org { fill: #f39a25; fill-opacity: 1; stroke: #dc7f12; }
.sect text { font: bold 4px "Liberation Sans", sans-serif; fill: #333; }
.gridbox { display: flex; background: #f0f0f0; padding: 0 3px 2px 1px; }
.secs { flex: 1; border-top: 1px solid #999; border-left: 1px solid #999; text-align: center; }
.secs th, .secs td { height: 9px; border-right: 1px solid #a5a5a5; border-bottom: 1px solid #a5a5a5; background: #fff; }
.secs th { background: #f0f0f0; }
.secs thead tr:first-child th { background: #e1e1e1; }
.secs .nb { border-bottom: 0; }
.secs .off { background: #f0f0f0; }
.cn { width: 26px; }
.ck { width: 41px; }
.cm { width: 16px; }
.secs th.sel, .params th.sel { background: #0078d7; color: #fff; }
.sech { background: #f0f0f0; padding-right: 3px; }
.sech i { margin-right: 23px; }
.sheets { display: flex; align-items: flex-start; background: #f0f0f0; padding: 5px 2px 12px 1px; white-space: nowrap; }
.sheets > button { height: 9px; line-height: 8px; padding: 0 2px; border: 1px solid #888; border-top-color: #777; border-left: 0; background: #ececec; margin-right: 1px; }
.sheets > button.cur { background: #fff; border-top: 0; }
.pager { margin-left: auto; display: flex; gap: 1px; }
.pager button { width: 8px; height: 9px; background: #fff; }
.pager svg { width: 7px; height: 7px; }

.status { height: 12px; display: flex; align-items: center; gap: 1px; background: linear-gradient(#c9cdd5, #a9aeb9 50%, #c3c7cf); padding-left: 2px; }
.ready { width: 307px; }
.status button { height: 10px; line-height: 8px; padding: 0 1px; border: 1px solid #70747c; border-right-color: #d5d8de; border-bottom-color: #d5d8de; background: #acb1bb; }
.status button.flat { border-color: #c7cad1; }
.cells { flex: 1; display: flex; justify-content: flex-end; gap: 41px; padding-right: 52px; }
.cells i { width: 1px; height: 11px; background: #989ea9; }

.dlg { position: absolute; background: #f0f0f0; display: flex; flex-direction: column; border: 1px solid #8a8a8a; box-shadow: 0 2px 6px rgba(0, 0, 0, .45); }
.dlg header { display: flex; align-items: center; justify-content: space-between; background: #fff; height: 17px; padding: 0 5px 0 4px; font: 7px/9px Roboto, sans-serif; color: #8e8e8e; }
.dlg header svg { width: 7px; height: 7px; fill: none; stroke: #999; }
.params { left: 41px; top: 81px; width: 424px; height: 320px; }
.pbody { flex: 1; display: flex; flex-direction: column; padding: 4px 4px 0 3px; min-height: 0; }
.params h3 { height: 9px; line-height: 9px; background: #dbe6fc; color: #27278a; clip-path: polygon(0 0, 99% 0, 100% 60%, 100% 100%, 0 100%); }
.plist { flex: 1; min-height: 0; border-right: 1px solid #aeb0e6; }
.plist table { height: 100%; }
.plist th, .plist td { height: 9px; border-right: 1px solid #aaa; border-bottom: 1px solid #aaa; text-align: left; padding-left: 2px; background: #fff; }
.plist th { background: #e1e1e1; text-align: center; padding: 0; }
.plist .abc th { height: 8px; line-height: 7px; border-color: #999; }
.plist .hd th { background: #f0f0f0; height: 10px; }
.plist td.num { text-align: right; padding-right: 2px; }
.plist td.off { background: #f0f0f0; }
.plist .rest td { background: #f0f0f0; height: auto; }
.plist .rest th { height: auto; }
.plist td.cell { outline: 1px dotted #333; outline-offset: -1px; padding-left: 0; }
mark { background: #f8f19c; color: #6b6420; padding: 1px 6px 1px 0; }
mark.long { padding: 1px 8px 1px 0; }
.p0 { width: 20px; }
.p1 { width: 48px; }
.p3 { width: 44px; }
.p4 { width: 38px; }
.p6 { width: 6px; }
.params .kom { margin-top: 7px; border: 0; }
.params .hscroll { border-bottom: 1px solid #aeb0e6; }
.params textarea { height: 26px; width: 100%; background: #fff; border: 1px solid #e0e0e0; }
.hint { height: 21px; padding-top: 5px; border-bottom: 1px solid #c9c9c9; line-height: 10px; white-space: nowrap; overflow: hidden; }
.btns { display: flex; gap: 5px; height: 23px; padding: 5px 0 0 1px; }
.btns button { width: 14px; height: 13px; display: flex; justify-content: center; align-items: center; background: #e4e4e4; border: 1px solid #c4c4c4; }
.btns button.dis { background: #d0d0d0; }
.btns svg { width: 9px; height: 9px; }

.oper { left: 185px; top: 219px; width: 474px; height: 274px; }
.oper header { color: #111; }
.oper header svg { stroke: #333; }
.obody { flex: 1; display: flex; flex-direction: column; padding: 4px 4px 5px; min-height: 0; }
.otabs { display: flex; align-items: flex-end; height: 11px; }
.otabs button { height: 10px; padding: 0 4px 0 3px; border: 1px solid #ddd; border-left: 0; border-bottom: 0; line-height: 9px; }
.otabs button.cur { height: 11px; background: #fff; padding: 0 4px; }
.sheet { flex: 1; min-height: 0; background: #fff; border: 1px solid #e0e0e0; padding: 6px 6px 5px 5px; display: flex; flex-direction: column; }
.band { height: 8px; background: #dbe6f6; clip-path: polygon(0 0, 99% 0, 100% 70%, 100% 100%, 0 100%); }
.olist { flex: 1; min-height: 0; display: flex; border-right: 1px solid #9c9edc; }
.olist table { flex: 1; height: 194px; border-top: 1px solid #aaa; border-left: 1px solid #aaa; }
.olist th, .olist td { background: #efefef; border-right: 1px solid #b2b2b2; border-bottom: 1px solid #b2b2b2; }
.olist td { padding-left: 2px; }
.olist th { height: 10px; }
.o1 { width: 147px; }
.o2 { width: 141px; }
.olist .hl td { background: #f4ee92; border-color: #b9b25c; color: #635c1c; }
.olist .hl td:nth-child(2) { box-shadow: inset 0 0 0 1px #8d8838; }
.obot { display: flex; justify-content: space-between; align-items: flex-end; padding-top: 3px; }
.desc { width: 413px; height: 19px; display: flex; border: 1px solid #aaa; }
.desc textarea { flex: 1; background: #f0f0f0; padding: 1px; height: 17px; }
.desc .vscroll svg { height: 8px; }
.close { width: 42px; height: 12px; background: #e3e3e3; border: 1px solid #0078d7; line-height: 10px; text-align: center; }
</style>
